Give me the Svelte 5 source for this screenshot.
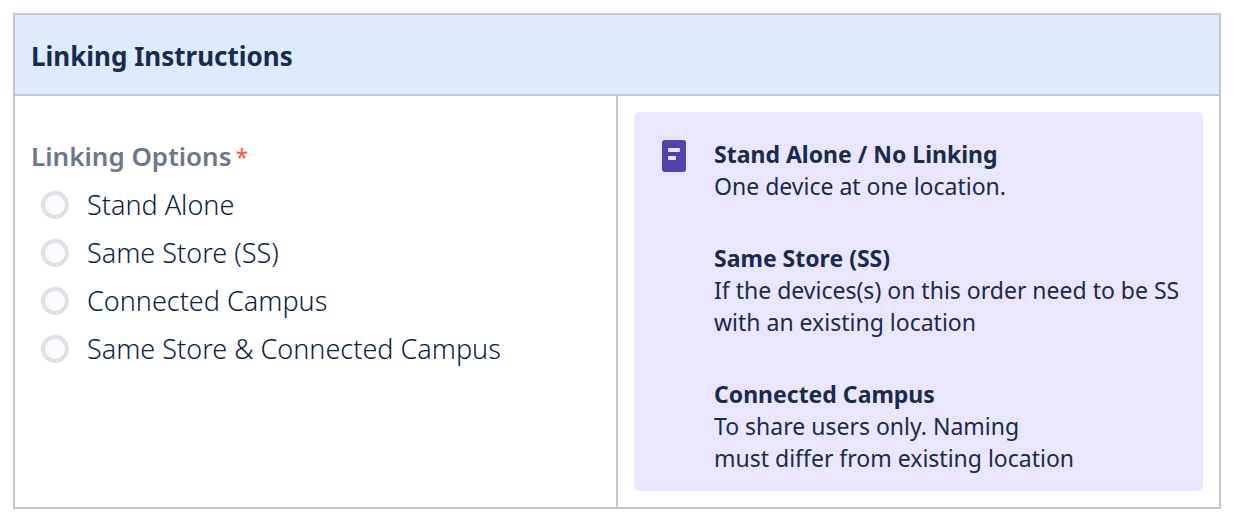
<script lang="ts">
  const options = ['Stand Alone', 'Same Store (SS)', 'Connected Campus', 'Same Store & Connected Campus'];

  const notes = [
    { title: 'Stand Alone / No Linking', lines: ['One device at one location.'] },
    { title: 'Same Store (SS)', lines: ['If the devices(s) on this order need to be SS', 'with an existing location'] },
    { title: 'Connected Campus', lines: ['To share users only. Naming', 'must differ from existing location'] },
  ];

  let selected = $state('');
</script>

<table>
  <thead>
    <tr>
      <th colspan="2">Linking Instructions</th>
    </tr>
  </thead>
  <tbody>
    <tr>
      <td>
        <fieldset>
          <legend>Linking Options<span class="required">*</span></legend>
          {#each options as option}
            <label>
              <input type="radio" name="linking" value={option} bind:group={selected} />
              <span>{option}</span>
            </label>
          {/each}
        </fieldset>
      </td>
      <td>
        <div class="panel">
          <svg class="icon" viewBox="0 0 24 32" aria-hidden="true">
            <rect width="24" height="32" rx="3" fill="#5243aa" />
            <rect x="6" y="8" width="12" height="4" rx="1" fill="#eae6ff" />
            <rect x="6" y="16" width="8" height="4" rx="1" fill="#eae6ff" />
          </svg>
          <div class="notes">
            {#each notes as note}
              <p>
                <strong>{note.title}</strong>
                {#each note.lines as line}
                  <span class="line">{line}</span>
                {/each}
              </p>
            {/each}
          </div>
        </div>
      </td>
    </tr>
  </tbody>
</table>

<style>
  :global(body) {
    padding: 13px 14px 18px 13px;
    background: #fff;
    color: #172b4d;
    font-family: "Noto Sans", "Open Sans", sans-serif;
  }
  table {
    width: 100%;
    border-collapse: collapse;
    table-layout: fixed;
  }
  th, td {
    border: 2px solid #c1c7d0;
    padding: 16px;
    text-align: left;
    vertical-align: top;
  }
  th {
    padding: 18px 16px 15px;
    background: #deebff;
    font-size: 26px;
    font-weight: 700;
    line-height: 46px;
  }
  fieldset {
    margin: 0;
    padding: 24px 0 0;
    border: 0;
  }
  legend {
    float: left;
    width: 100%;
    margin-bottom: 4px;
    padding: 0;
    color: #6b778c;
    font-size: 26px;
    font-weight: 600;
    line-height: 40px;
  }
  .required {
    margin-left: 4px;
    color: #ff5630;
    font-size: 23px;
    font-weight: 400;
  }
  label {
    display: flex;
    clear: both;
    align-items: center;
    gap: 18px;
    padding-left: 10px;
    color: #091e42;
    font-size: 27px;
    font-weight: 300;
    line-height: 48px;
  }
  input {
    appearance: none;
    width: 28px;
    height: 28px;
    margin: 0;
    border: 4px solid #dfe1e6;
    border-radius: 50%;
    background: #fafbfc;
  }
  input:checked {
    border-color: #0052cc;
  }
  .panel {
    display: flex;
    gap: 28px;
    padding: 26px 16px 17px 28px;
    border-radius: 6px;
    background: #eae6ff;
  }
  .icon {
    flex: none;
    width: 24px;
    height: 32px;
    margin-top: 2px;
  }
  .notes {
    display: flex;
    flex-direction: column;
    gap: 40px;
    font-size: 23px;
    line-height: 32px;
    white-space: nowrap;
  }
  p {
    margin: 0;
  }
  strong, .line {
    display: block;
  }
</style>
